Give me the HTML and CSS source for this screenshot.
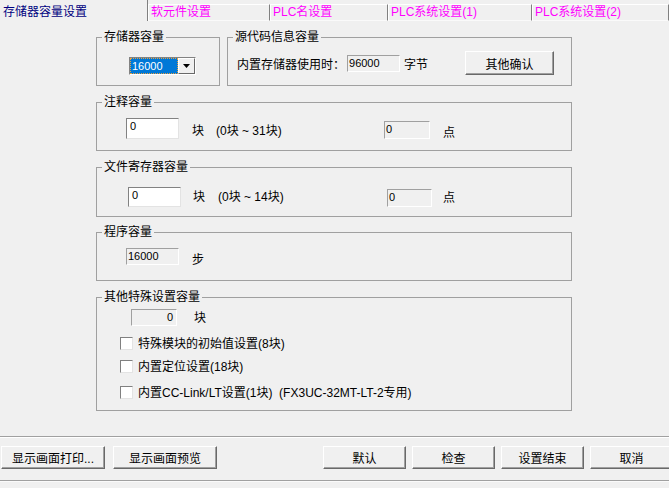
FILE: index.html
```html
<!DOCTYPE html>
<html lang="zh-CN">
<head>
    <meta charset="UTF-8">
    <title>PLC参数设置</title>
    <link rel="stylesheet" href="styles.css">
</head>
<body>

<div class="window">
    <div class="tabs">
        <div class="tab active">存储器容量设置</div>
        <div class="tab tab-2">软元件设置</div>
        <div class="tab tab-3">PLC名设置</div>
        <div class="tab tab-4">PLC系统设置(1)</div>
        <div class="tab tab-5">PLC系统设置(2)</div>
    </div>

    <div class="panel">
        <div class="top-row">
            <fieldset class="group group-mem">
                <legend>存储器容量</legend>
                <div class="row">
                    <div class="combo">
                        <span class="combo-value">16000</span>
                        <span class="combo-btn">
                            <svg width="7" height="4" viewBox="0 0 7 4"><path d="M0 0h7L3.5 4z" fill="#000"/></svg>
                        </span>
                    </div>
                </div>
            </fieldset>

            <fieldset class="group group-src">
                <legend>源代码信息容量</legend>
                <div class="row">
                    <span class="src-label">内置存储器使用时：</span>
                    <span class="field readonly src-field">96000</span>
                    <span class="src-unit">字节</span>
                    <button class="btn btn-confirm">其他确认</button>
                </div>
            </fieldset>
        </div>

        <fieldset class="group group-comment">
            <legend>注释容量</legend>
            <div class="row">
                <span class="field edit">0</span>
                <span class="unit">块</span>
                <span class="range">(0块 ~ 31块)</span>
                <span class="field readonly small">0</span>
                <span class="unit unit-point">点</span>
            </div>
        </fieldset>

        <fieldset class="group group-file">
            <legend>文件寄存器容量</legend>
            <div class="row">
                <span class="field edit">0</span>
                <span class="unit">块</span>
                <span class="range">(0块 ~ 14块)</span>
                <span class="field readonly small">0</span>
                <span class="unit unit-point">点</span>
            </div>
        </fieldset>

        <fieldset class="group group-program">
            <legend>程序容量</legend>
            <div class="row">
                <span class="field readonly">16000</span>
                <span class="unit">步</span>
            </div>
        </fieldset>

        <fieldset class="group group-special">
            <legend>其他特殊设置容量</legend>
            <div class="row">
                <span class="field readonly small right">0</span>
                <span class="unit">块</span>
            </div>
            <label class="check check-1"><span class="box"></span>特殊模块的初始值设置(8块)</label>
            <label class="check check-2"><span class="box"></span>内置定位设置(18块)</label>
            <label class="check check-3"><span class="box"></span>内置CC-Link/LT设置(1块)&nbsp;&nbsp;(FX3UC-32MT-LT-2专用)</label>
        </fieldset>
    </div>

    <div class="footer">
        <div class="btn-group">
            <button class="btn btn-wide">显示画面打印...</button>
            <button class="btn btn-wide">显示画面预览</button>
        </div>
        <div class="btn-group btn-group-right">
            <button class="btn">默认</button>
            <button class="btn">检查</button>
            <button class="btn">设置结束</button>
            <button class="btn">取消</button>
        </div>
    </div>
</div>

</body>
</html>
```

FILE: styles.css
```css
* {
    box-sizing: border-box;
}

body {
    margin: 0;
    width: 669px;
    height: 488px;
    overflow: hidden;
    background-color: #f0f0f0;
    font-family: "Liberation Sans", "Noto Sans CJK SC", sans-serif;
    font-size: 12px;
    color: #000;
}

.window {
    display: flex;
    flex-direction: column;
    height: 488px;
}

/* tabs */
.tabs {
    display: flex;
    align-items: flex-end;
    height: 21px;
    flex-shrink: 0;
}

.tab {
    height: 17px;
    line-height: 14px;
    padding-left: 2px;
    color: #ff00ff;
    border-top: 1px solid #fff;
    border-left: 1px solid #fff;
    border-right: 1px solid #808080;
    border-bottom: 1px solid #fafafa;
    white-space: nowrap;
}

.tab.active {
    width: 148px;
    height: 21px;
    line-height: 16px;
    padding: 4px 0 0 3px;
    color: #000080;
    border: none;
    border-right: 1px solid #808080;
}

.tab-2 { width: 122px; }
.tab-3 { width: 118px; }
.tab-4 { width: 144px; }
.tab-5 { flex: 1; }

/* panel */
.panel {
    height: 415px;
    padding: 9px 0 0 96px;
    flex-shrink: 0;
}

.top-row {
    display: flex;
    gap: 7px;
    width: 476px;
}

.group {
    margin: 0;
    padding: 0;
    min-width: 0;
    border: 1px solid #a0a0a0;
    width: 476px;
}

.group legend {
    margin-left: 5px;
    padding: 0 2px;
    line-height: 14px;
}

.row {
    display: flex;
    align-items: flex-end;
}

.group-mem {
    width: 124px;
    padding: 7px 0 10px;
}

.group-src {
    width: 345px;
    padding: 7px 0 10px;
}

.group-mem .row,
.group-src .row {
    height: 24px;
    align-items: center;
}

.group-comment {
    margin-top: 9px;
    padding: 9px 0 11px;
}

.group-file {
    margin-top: 9px;
    padding: 13px 0 9px;
}

.group-program {
    margin-top: 8px;
    padding: 9px 0 15px;
}

.group-special {
    margin-top: 9px;
    padding: 5px 0 11px;
}

/* combo box */
.combo {
    display: flex;
    align-self: flex-start;
    width: 67px;
    height: 18px;
    margin: 6px 0 0 32px;
    border: 1px solid;
    border-color: #828282 #fff #fff #828282;
    background-color: #fff;
}

.combo-value {
    flex: 1;
    padding-left: 1px;
    font-size: 11px;
    line-height: 14px;
    color: #fff;
    background-color: #0078d7;
    border: 1px dotted #e8a040;
}

.combo-btn {
    display: flex;
    align-items: center;
    justify-content: center;
    width: 17px;
    background-color: #f0f0f0;
    border: 1px solid;
    border-color: #fff #696969 #696969 #fff;
}

/* fields */
.field {
    width: 53px;
    height: 21px;
    padding-left: 3px;
    font-size: 11px;
    line-height: 15px;
    border: 1px solid;
    border-color: #828282 #e3e3e3 #e3e3e3 #828282;
}

.field.edit {
    background-color: #fff;
}

.field.readonly {
    height: 17px;
    padding-left: 1px;
    border-color: #a0a0a0 #fff #fff #a0a0a0;
}

.field.small {
    width: 46px;
    height: 18px;
}

.field.right {
    height: 17px;
    text-align: right;
    padding-right: 3px;
}

.unit {
    line-height: 16px;
}

.range {
    line-height: 16px;
}

.group-comment .field.edit { margin-left: 29px; }
.group-comment .unit { margin-left: 13px; }
.group-comment .range { margin-left: 12px; width: 168px; }
.group-comment .unit-point { margin: 0 0 -2px 13px; }

.group-file .field.edit { margin-left: 31px; height: 20px; }
.group-file .unit { margin: 0 0 2px 12px; }
.group-file .range { margin: 0 0 2px 13px; width: 169px; }
.group-file .field.small { width: 45px; }
.group-file .unit-point { margin: 0 0 1px 11px; }

.group-program .row { align-items: flex-start; height: 17px; }
.group-program .field { margin-left: 29px; }
.group-program .unit { margin: 4px 0 0 13px; }

.group-special .row { align-items: center; }
.group-special .field { margin-left: 34px; }
.group-special .unit { margin-left: 17px; }

.src-label {
    margin-left: 9px;
}

.src-field {
    margin-left: 2px;
}

.src-unit {
    margin-left: 4px;
}

/* checkboxes */
.check {
    display: flex;
    align-items: center;
    height: 13px;
    margin-left: 23px;
    line-height: 16px;
    white-space: nowrap;
}

.check .box {
    width: 13px;
    height: 13px;
    margin-right: 5px;
    background-color: #fff;
    border: 1px solid;
    border-color: #808080 #e3e3e3 #e3e3e3 #808080;
}

.check-1 { margin-top: 11px; }
.check-2 { margin-top: 10px; }
.check-3 { margin-top: 13px; }

/* buttons */
.btn {
    height: 23px;
    width: 83px;
    padding: 0;
    font-family: inherit;
    font-size: 12px;
    color: #000;
    background-color: #f0f0f0;
    border: 1px solid;
    border-color: #fff #696969 #696969 #fff;
    box-shadow: inset -1px -1px #a0a0a0;
}

.btn-confirm {
    width: 89px;
    height: 24px;
    margin-left: 37px;
}

.btn-wide {
    width: 104px;
}

/* footer */
.footer {
    display: flex;
    height: 45px;
    padding: 9px 0 0 1px;
    border-top: 1px solid #a0a0a0;
    border-bottom: 1px solid #a0a0a0;
    box-shadow: inset 0 1px #fff, 0 1px #fafafa;
    flex-shrink: 0;
}

.btn-group {
    display: flex;
    gap: 8px;
}

.btn-group-right {
    gap: 6px;
    margin-left: 106px;
}
```
